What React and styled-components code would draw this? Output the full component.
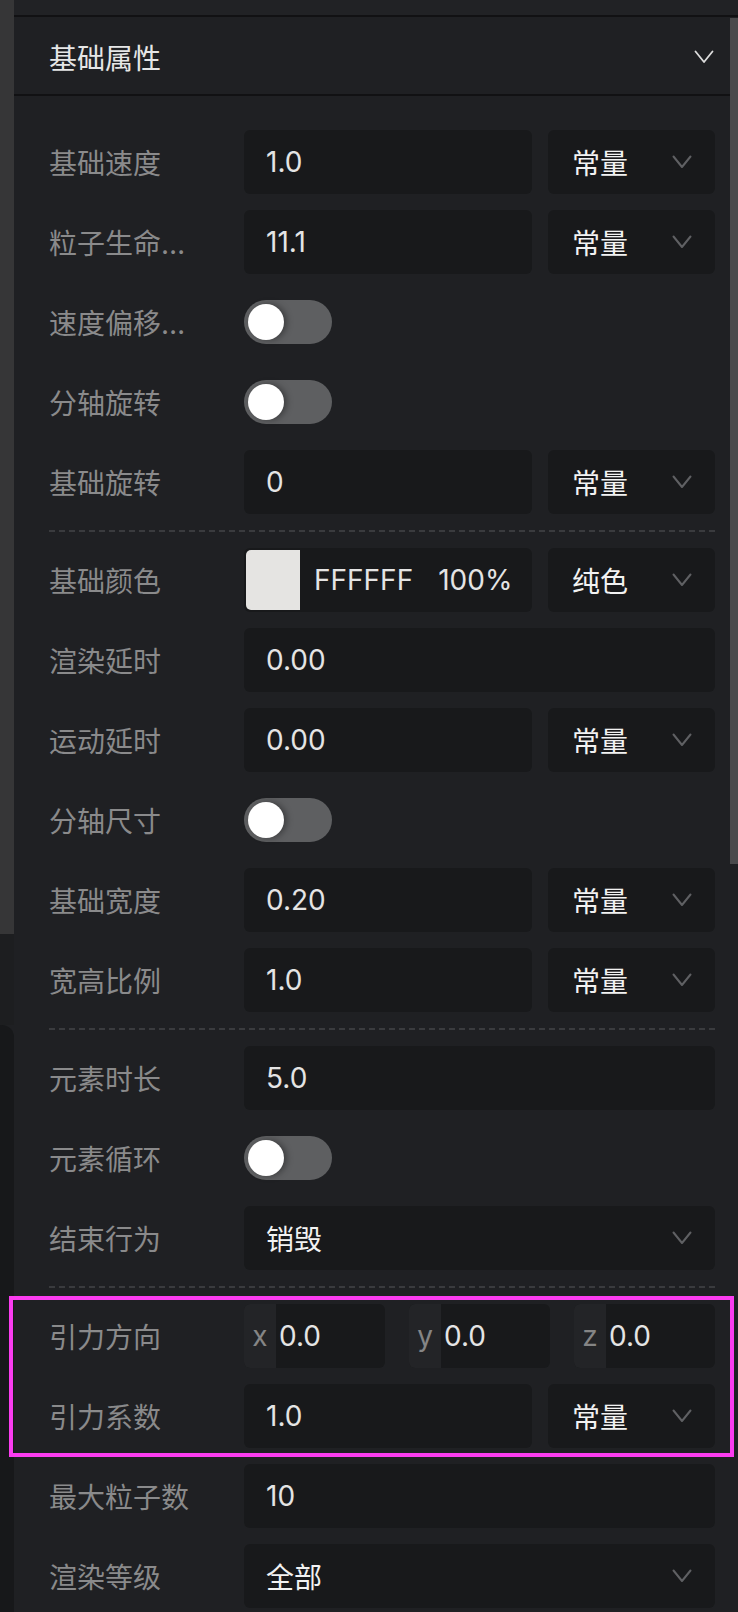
import React from "react";
import styled, { createGlobalStyle } from "styled-components";

const GlobalStyle = createGlobalStyle`
  html, body {
    margin: 0;
    padding: 0;
    background: #1f2023;
  }
  body {
    font-family: Inter, "Noto Sans CJK SC", sans-serif;
    -webkit-font-smoothing: antialiased;
  }
`;

const Chevron = ({ color = "#5f6063", width = 20, height = 14, stroke = 2 }) => (
  <svg width={width} height={height} viewBox="0 0 20 14" fill="none">
    <polyline
      points="1.5,1.5 10,12 18.5,1.5"
      stroke={color}
      strokeWidth={stroke}
      strokeLinecap="round"
      strokeLinejoin="round"
    />
  </svg>
);

const Toggle = ({ on = false }) => (
  <Track $on={on}>
    <Knob $on={on} />
  </Track>
);

const NumberField = ({ value }) => (
  <Box>
    <Value>{value}</Value>
  </Box>
);

const Select = ({ value, pad = 24 }) => (
  <Box $pad={pad}>
    <SelectText>{value}</SelectText>
    <Chevron />
  </Box>
);

const Row = ({ label, children }) => (
  <RowWrap>
    <Label>{label}</Label>
    {children}
  </RowWrap>
);

export default function App() {
  return (
    <Page>
      <GlobalStyle />
      <Side>
        <SideTop />
        <SideGap />
        <SideCard />
      </Side>

      <Main>
        <TopBar />
        <Content>
          <Panel>
            <Header>
              <Title>基础属性</Title>
              <Chevron color="#dcdcdc" stroke={1.8} />
            </Header>

            <Body>
              <Row label="基础速度">
                <Controls $split>
                  <NumberField value="1.0" />
                  <Select value="常量" />
                </Controls>
              </Row>
              <Row label="粒子生命周期">
                <Controls $split>
                  <NumberField value="11.1" />
                  <Select value="常量" />
                </Controls>
              </Row>
              <Row label="速度偏移随机">
                <Toggle />
              </Row>
              <Row label="分轴旋转">
                <Toggle />
              </Row>
              <Row label="基础旋转">
                <Controls $split>
                  <NumberField value="0" />
                  <Select value="常量" />
                </Controls>
              </Row>

              <Divider />

              <Row label="基础颜色">
                <Controls $split>
                  <ColorBox>
                    <Swatch $color="#e5e4e2" />
                    <Value $pad={14}>FFFFFF</Value>
                    <Value $pad={25}>100%</Value>
                  </ColorBox>
                  <Select value="纯色" />
                </Controls>
              </Row>
              <Row label="渲染延时">
                <Controls>
                  <NumberField value="0.00" />
                </Controls>
              </Row>
              <Row label="运动延时">
                <Controls $split>
                  <NumberField value="0.00" />
                  <Select value="常量" />
                </Controls>
              </Row>
              <Row label="分轴尺寸">
                <Toggle />
              </Row>
              <Row label="基础宽度">
                <Controls $split>
                  <NumberField value="0.20" />
                  <Select value="常量" />
                </Controls>
              </Row>
              <Row label="宽高比例">
                <Controls $split>
                  <NumberField value="1.0" />
                  <Select value="常量" />
                </Controls>
              </Row>

              <Divider />

              <Row label="元素时长">
                <Controls>
                  <NumberField value="5.0" />
                </Controls>
              </Row>
              <Row label="元素循环">
                <Toggle />
              </Row>
              <Row label="结束行为">
                <Controls>
                  <Select value="销毁" pad={22} />
                </Controls>
              </Row>

              <Divider />

              <Highlight>
                <Row label="引力方向">
                  <Vector>
                    {["x", "y", "z"].map((axis) => (
                      <AxisBox key={axis}>
                        <Axis>{axis}</Axis>
                        <Value $pad={3}>0.0</Value>
                      </AxisBox>
                    ))}
                  </Vector>
                </Row>
                <Row label="引力系数">
                  <Controls $split>
                    <NumberField value="1.0" />
                    <Select value="常量" />
                  </Controls>
                </Row>
              </Highlight>

              <Row label="最大粒子数">
                <Controls>
                  <NumberField value="10" />
                </Controls>
              </Row>
              <Row label="渲染等级">
                <Controls>
                  <Select value="全部" pad={22} />
                </Controls>
              </Row>
            </Body>
          </Panel>

          <ScrollTrack>
            <Thumb />
          </ScrollTrack>
        </Content>
      </Main>
    </Page>
  );
}

const Page = styled.div`
  display: flex;
  width: 738px;
  min-height: 1612px;
  background: #1f2023;
  overflow: hidden;
`;

const Side = styled.aside`
  width: 14px;
  flex-shrink: 0;
  display: flex;
  flex-direction: column;
`;

const SideTop = styled.div`
  height: 934px;
  background: #363637;
`;

const SideGap = styled.div`
  height: 91px;
  background: #1d1e20;
`;

const SideCard = styled.div`
  flex: 1;
  background: #17181a;
  border-top-right-radius: 12px;
`;

const Main = styled.div`
  flex: 1;
  display: flex;
  flex-direction: column;
`;

const TopBar = styled.div`
  height: 15px;
  background: #212225;
  border-bottom: 2px solid #111113;
`;

const Content = styled.div`
  display: flex;
  flex: 1;
`;

const Panel = styled.section`
  flex: 1;
  display: flex;
  flex-direction: column;
`;

const Header = styled.div`
  height: 79px;
  display: flex;
  align-items: center;
  justify-content: space-between;
  padding: 3px 16px 0 35px;
  box-sizing: border-box;
  border-bottom: 2px solid #111113;
`;

const Title = styled.h2`
  margin: 0;
  font-size: 28px;
  font-weight: 400;
  color: #e6e6e6;
  letter-spacing: 0;
`;

const Body = styled.div`
  display: flex;
  flex-direction: column;
  gap: 16px;
  padding: 34px 15px 0 35px;
`;

const RowWrap = styled.div`
  display: grid;
  grid-template-columns: 195px 1fr;
  align-items: center;
  height: 64px;
`;

const Label = styled.span`
  max-width: 142px;
  font-size: 28px;
  color: #8a8a8b;
  white-space: nowrap;
  overflow: hidden;
  text-overflow: ellipsis;
`;

const Controls = styled.div`
  display: grid;
  grid-template-columns: ${(p) => (p.$split ? "1fr 167px" : "1fr")};
  gap: 16px;
  height: 100%;
`;

const Box = styled.div`
  display: flex;
  align-items: center;
  justify-content: space-between;
  height: 100%;
  padding: 0 23px 0 ${(p) => p.$pad || 22}px;
  box-sizing: border-box;
  background: #18191b;
  border-radius: 6px;
  overflow: hidden;
`;

const Value = styled.span`
  font-size: 28px;
  color: #e4e4e4;
  margin-left: ${(p) => p.$pad || 0}px;
  white-space: nowrap;
`;

const SelectText = styled.span`
  font-size: 28px;
  color: #f2f2f2;
`;

const ColorBox = styled.div`
  display: flex;
  align-items: center;
  height: 100%;
  padding: 2px;
  box-sizing: border-box;
  background: #18191b;
  border-radius: 6px;
`;

const Swatch = styled.div`
  width: 54px;
  height: 100%;
  background: ${(p) => p.$color};
  border-radius: 5px 0 0 5px;
`;

const Vector = styled.div`
  display: grid;
  grid-template-columns: repeat(3, 1fr);
  gap: 24px;
  height: 100%;
`;

const AxisBox = styled.div`
  display: flex;
  align-items: center;
  height: 100%;
  background: #18191b;
  border-radius: 6px;
  overflow: hidden;
`;

const Axis = styled.span`
  width: 32px;
  height: 100%;
  display: flex;
  align-items: center;
  justify-content: center;
  background: #232427;
  color: #858585;
  font-size: 28px;
`;

const Track = styled.div`
  width: 88px;
  height: 44px;
  border-radius: 22px;
  background: ${(p) => (p.$on ? "#3b82f6" : "#5e5f61")};
  display: flex;
  align-items: center;
  justify-content: ${(p) => (p.$on ? "flex-end" : "flex-start")};
  padding: 0 4px;
  box-sizing: border-box;
`;

const Knob = styled.div`
  width: 36px;
  height: 36px;
  border-radius: 50%;
  background: #ffffff;
  box-shadow: 3px 0 6px rgba(0, 0, 0, 0.35);
`;

const Divider = styled.div`
  height: 2px;
  background: repeating-linear-gradient(
    to right,
    #3a3b3e 0,
    #3a3b3e 6px,
    transparent 6px,
    transparent 10px
  );
`;

const Highlight = styled.div`
  position: relative;
  display: flex;
  flex-direction: column;
  gap: 16px;

  &::before {
    content: "";
    position: absolute;
    top: -8px;
    bottom: -9px;
    left: -40px;
    right: -19px;
    border: 4px solid #fb3cf0;
    pointer-events: none;
  }
`;

const ScrollTrack = styled.div`
  width: 8px;
  flex-shrink: 0;
  padding-top: 1px;
`;

const Thumb = styled.div`
  height: 846px;
  background: #4a4a4c;
`;
